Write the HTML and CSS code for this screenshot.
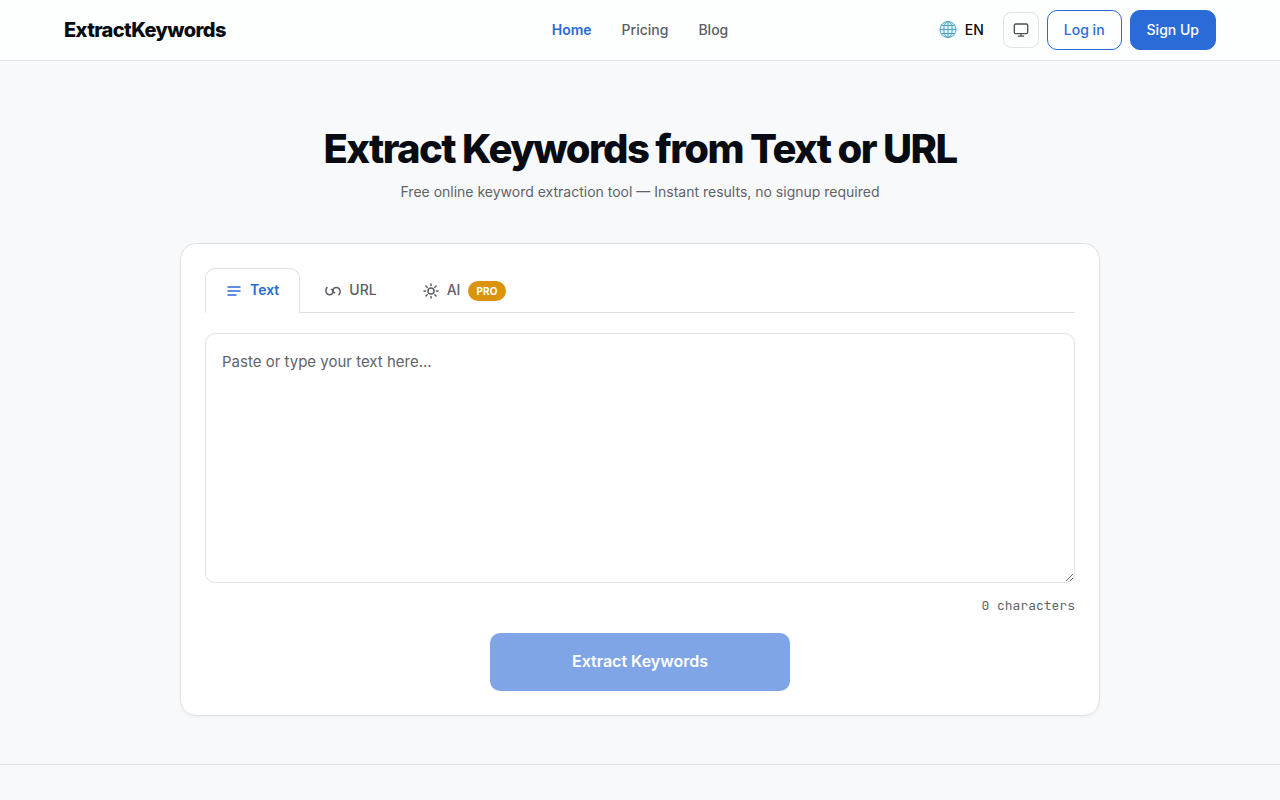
FILE: index.html
```html
<!DOCTYPE html>
<html lang="en">
<head>
<meta charset="utf-8">
<meta name="viewport" content="width=device-width, initial-scale=1">
<title>ExtractKeywords</title>
<link rel="stylesheet" href="styles.css">
</head>
<body>
<header class="site-header">
  <div class="header-inner">
    <div class="header-start"><a class="brand" href="#">ExtractKeywords</a></div>
    <nav class="main-nav" aria-label="Main">
      <a class="nav-link nav-link-active" href="#">Home</a>
      <a class="nav-link" href="#">Pricing</a>
      <a class="nav-link" href="#">Blog</a>
    </nav>
    <div class="header-actions">
      <button class="lang-button" type="button">
        <svg class="globe" viewBox="0 0 18 18" fill="none" stroke="#4ba3c7" stroke-width="1" aria-hidden="true">
          <circle cx="9" cy="8.500" r="8" fill="#e2f3fa"/>
          <ellipse cx="9" cy="8.500" rx="4.200" ry="8"/>
          <path d="M9 .5v16M1 8.500h16M2.400 4.500h13.200M2.400 12.500h13.200"/>
        </svg>
        <span>EN</span>
      </button>
      <button class="theme-button" type="button" aria-label="Theme">
        <svg class="icon" viewBox="0 0 16 16" fill="none" stroke="currentColor" stroke-width="1.3" stroke-linecap="round" stroke-linejoin="round" aria-hidden="true">
          <rect x="1.3" y="2" width="13.4" height="9.6" rx="1.3"/>
          <path d="M8 11.600v2.600M5.400 14.200h5.200"/>
        </svg>
      </button>
      <a class="button button-outline" href="#">Log in</a>
      <a class="button button-solid" href="#">Sign Up</a>
    </div>
  </div>
</header>
<main class="hero">
  <h1 class="title">Extract Keywords from Text or URL</h1>
  <p class="subtitle">Free online keyword extraction tool — Instant results, no signup required</p>
  <form class="card">
    <div class="tabs" role="tablist">
      <button class="tab tab-active" type="button" role="tab" aria-selected="true">
        <svg class="icon" viewBox="0 0 16 16" fill="none" stroke="currentColor" stroke-width="1.5" stroke-linecap="round" aria-hidden="true">
          <path d="M2 4h12M2 8h12M2 12h8"/>
        </svg>
        <span class="tab-label">Text</span>
      </button>
      <button class="tab" type="button" role="tab" aria-selected="false">
        <svg class="icon" viewBox="0 0 16 16" fill="none" stroke="currentColor" stroke-width="1.5" stroke-linecap="round" aria-hidden="true">
          <path d="M2 4.500C-.2 7.400 1.200 11.700 4.500 11.700C6.500 11.700 8 10.200 8 8.300C8 7.200 7.300 6.500 6.300 6.500"/>
          <path d="M14 11.700C16.200 8.800 14.800 4.500 11.500 4.500C9.500 4.500 8 6 8 7.800C8 9 8.700 9.700 9.700 9.700"/>
        </svg>
        <span class="tab-label">URL</span>
      </button>
      <button class="tab" type="button" role="tab" aria-selected="false">
        <svg class="icon" viewBox="0 0 16 16" fill="none" stroke="currentColor" stroke-width="1.5" stroke-linecap="round" aria-hidden="true">
          <circle cx="8" cy="8" r="3"/>
          <path d="M8 1v1.600M8 13.400V15M1 8h1.600M13.400 8H15M3 3l1.200 1.200M11.800 11.800L13 13M13 3l-1.200 1.200M4.200 11.800L3 13"/>
        </svg>
        <span class="tab-label">AI</span>
        <span class="badge">PRO</span>
      </button>
    </div>
    <textarea class="text-input" aria-label="Text" placeholder="Paste or type your text here..."></textarea>
    <div class="counter">0 characters</div>
    <button class="submit" type="submit" disabled>Extract Keywords</button>
  </form>
</main>
<section class="next-section"></section>
</body>
</html>
```
FILE: styles.css
```css
* {
  box-sizing: border-box;
}

body {
  margin: 0;
  min-height: 100vh;
  display: flex;
  flex-direction: column;
  background: #f8f9fb;
  color: #080c12;
  font-family: Inter, "Liberation Sans", sans-serif;
  font-size: 14px;
  line-height: 20px;
}

button,
textarea {
  font: inherit;
}

a {
  text-decoration: none;
}

.icon {
  flex: none;
  width: 16px;
  height: 16px;
}

.site-header {
  background: #fdfefe;
  border-bottom: 1px solid #dfe1e4;
}

.header-inner {
  display: grid;
  grid-template-columns: 1fr auto 1fr;
  align-items: center;
  max-width: 1200px;
  margin: 0 auto;
  padding: 10px 24px;
}

.brand {
  display: block;
  color: #080c12;
  font-size: 20px;
  font-weight: 800;
  line-height: 24px;
  letter-spacing: -0.03em;
}

.main-nav {
  display: flex;
  gap: 30px;
}

.nav-link {
  color: #5b5f66;
  font-weight: 500;
}

.nav-link-active {
  color: #2a6bd8;
  font-weight: 600;
}

.header-actions {
  display: flex;
  align-items: center;
  justify-content: flex-end;
  gap: 8px;
}

.lang-button {
  display: flex;
  align-items: center;
  gap: 8px;
  padding: 8px 11px;
  border: 0;
  background: transparent;
  color: #080c12;
  font-weight: 500;
}

.globe {
  width: 18px;
  height: 18px;
}

.theme-button {
  display: flex;
  align-items: center;
  justify-content: center;
  width: 36px;
  height: 36px;
  padding: 0;
  border: 1px solid #e0e2e5;
  border-radius: 8px;
  background: transparent;
  color: #4b4f56;
}

.button {
  padding: 9px 16px;
  border: 1px solid #2a6bd8;
  border-radius: 10px;
  font-weight: 500;
}

.button-outline {
  color: #2a6bd8;
}

.button-solid {
  background: #2a6bd8;
  color: #ffffff;
}

.hero {
  padding: 64px 24px 48px;
}

.title {
  margin: 0;
  font-size: 40px;
  font-weight: 800;
  line-height: 48px;
  letter-spacing: -0.04em;
  text-align: center;
}

.subtitle {
  margin: 8px 0 40px;
  color: #5f636a;
  line-height: 22px;
  text-align: center;
}

.card {
  display: flex;
  flex-direction: column;
  max-width: 920px;
  margin: 0 auto;
  padding: 24px;
  border: 1px solid #e0e2e5;
  border-radius: 16px;
  background: #ffffff;
  box-shadow: 0 1px 3px rgba(0, 0, 0, 0.05);
}

.tabs {
  display: flex;
  gap: 4px;
  margin-bottom: 20px;
  border-bottom: 1px solid #dfe1e4;
}

.tab {
  display: flex;
  align-items: center;
  gap: 8px;
  margin-bottom: -1px;
  padding: 12px 20px;
  border: 1px solid transparent;
  border-bottom: 0;
  border-radius: 10px 10px 0 0;
  background: transparent;
  color: #5b5f66;
  font-weight: 500;
}

.tab-label {
  padding-bottom: 2px;
  line-height: 18px;
}

.tab-active {
  border-color: #dfe1e4;
  background: #ffffff;
  color: #2a6bd8;
  font-weight: 600;
}

.badge {
  padding: 2px 8px;
  border-radius: 10px;
  background: #d9930d;
  color: #ffffff;
  font-size: 10px;
  font-weight: 700;
  line-height: 16px;
  letter-spacing: 0.02em;
}

.text-input {
  display: block;
  width: 100%;
  height: 250px;
  padding: 16px;
  border: 1px solid #dfe1e4;
  border-radius: 10px;
  background: #ffffff;
  color: #080c12;
  font-size: 15px;
  line-height: 24px;
  resize: vertical;
}

.text-input::placeholder {
  color: #5f636a;
  opacity: 1;
}

.counter {
  margin: 12px 0 16px;
  color: #5f636a;
  font-family: "JetBrains Mono", "Liberation Mono", monospace;
  font-size: 13px;
  line-height: 22px;
  text-align: right;
}

.submit {
  align-self: center;
  width: 300px;
  max-width: 100%;
  padding: 16px 32px 18px;
  border: 0;
  border-radius: 10px;
  background: #7fa5e7;
  color: #ffffff;
  font-size: 16px;
  font-weight: 600;
  line-height: 24px;
}

.next-section {
  flex: 1;
  border-top: 1px solid #dfe1e4;
}
```
